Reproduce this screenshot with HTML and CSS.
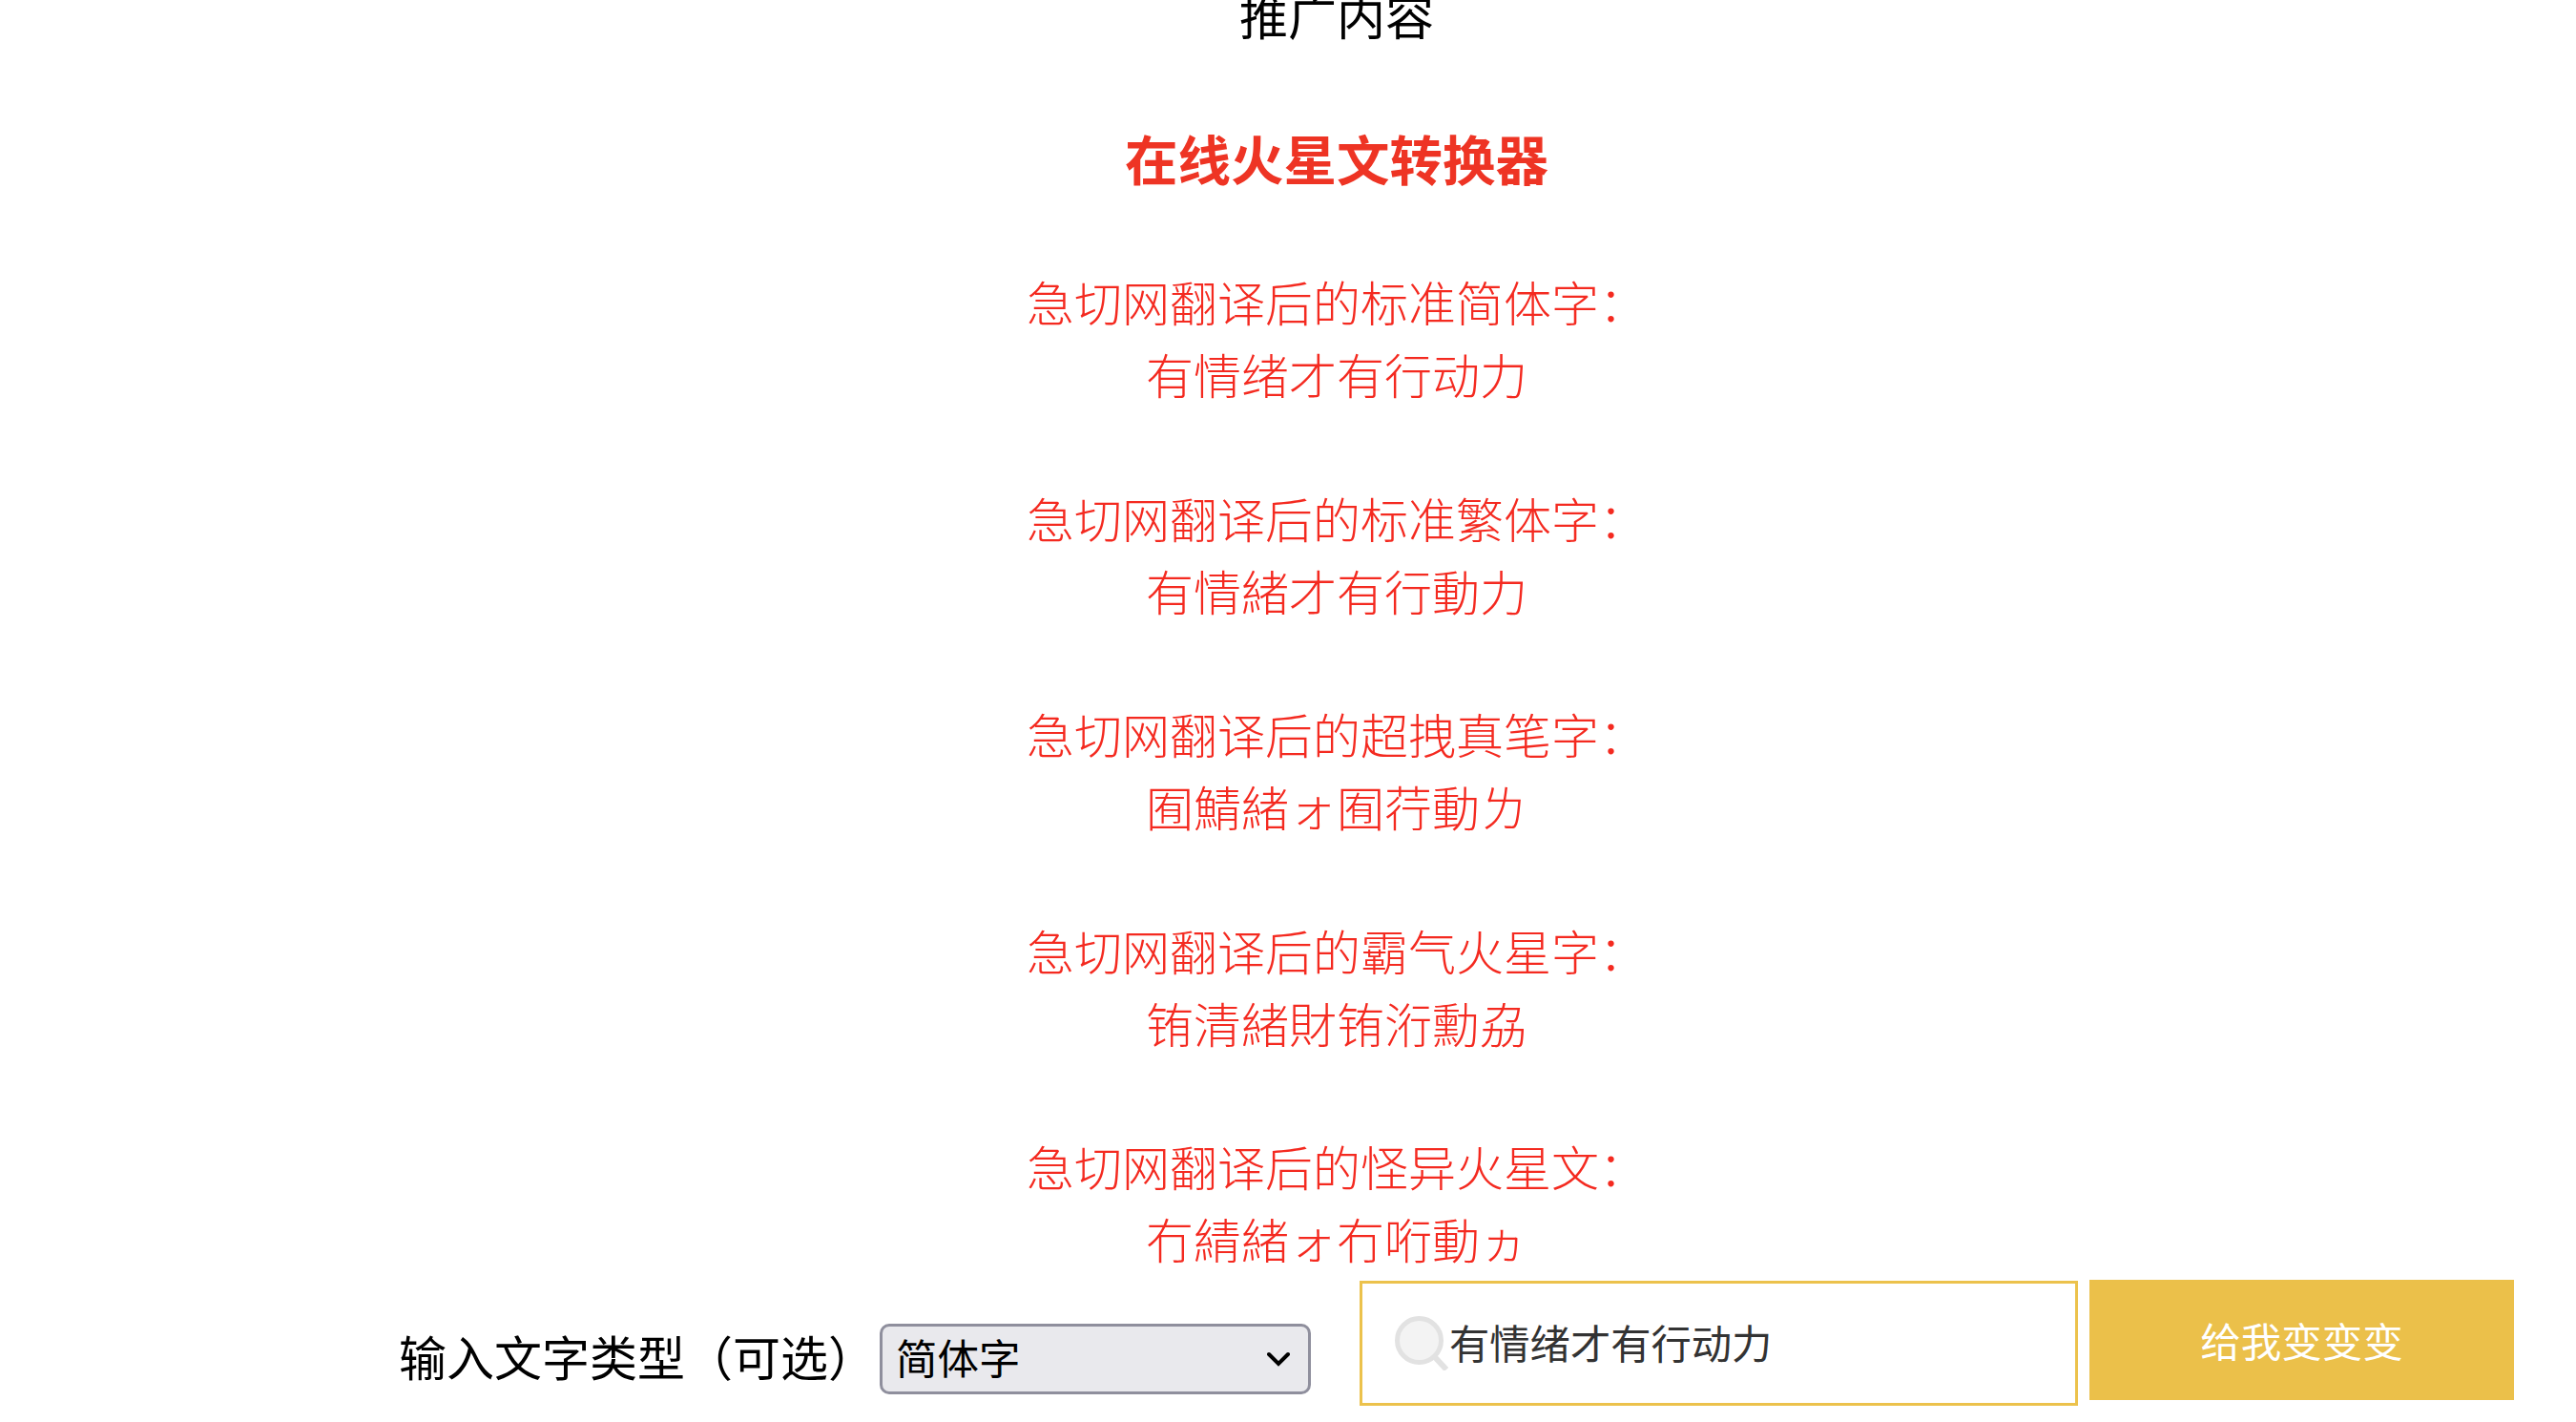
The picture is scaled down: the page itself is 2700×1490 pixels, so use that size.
FILE: index.html
```html
<!DOCTYPE html>
<html lang="zh-CN">
<head>
  <meta charset="UTF-8" />
  <title>在线火星文转换器</title>
  <link rel="stylesheet" href="styles.css">
</head>
<body>

  <div class="content">
    <h3 class="promo">推广内容</h3>
    <h1 class="title">在线火星文转换器</h1>

    <p class="result">急切网翻译后的标准简体字：<br>有情绪才有行动力</p>
    <p class="result">急切网翻译后的标准繁体字：<br>有情緒才有行動力</p>
    <p class="result">急切网翻译后的超拽真笔字：<br>囿鯖緒ォ囿荇動ㄌ</p>
    <p class="result">急切网翻译后的霸气火星字：<br>铕清緒財铕洐勳劦</p>
    <p class="result">急切网翻译后的怪异火星文：<br>冇綪緒ォ冇哘動ヵ</p>
  </div>

  <div class="convert">
    <label class="type-label" for="type">输入文字类型（可选）</label>
    <select id="type" class="type-select">
      <option>简体字</option>
      <option>繁体字</option>
      <option>超拽真笔字</option>
      <option>霸气火星字</option>
      <option>怪异火星文</option>
    </select>
    <div class="search">
      <svg class="search-icon" viewBox="0 0 56 57">
        <circle cx="25.5" cy="25.5" r="23" fill="#f3f3f3" stroke="#e2e2e2" stroke-width="5"/>
        <path d="M41 42 L54 56" stroke="#e2e2e2" stroke-width="6" fill="none"/>
      </svg>
      <input type="text" class="search-input" value="有情绪才有行动力" />
    </div>
    <button class="go">给我变变变</button>
  </div>

</body>
</html>
```

FILE: styles.css
```css
html, body {
  margin: 0;
  padding: 0;
  height: 1490px;
  overflow: hidden;
  background: white;
}

body {
  font-family: "Liberation Serif", "Noto Sans CJK SC", serif;
  color: #f42a20;
}

.content {
  width: 1540px;
  height: 1355px;
  margin-left: 631px;
  text-align: center;
}

.promo {
  margin: -13px 0 0;
  font-family: "Liberation Sans", "Noto Sans CJK SC", sans-serif;
  font-size: 51px;
  line-height: 66px;
  font-weight: 400;
  color: #000;
}

.title {
  margin: 81px 0 76px;
  font-family: "Liberation Sans", "Noto Sans CJK SC", sans-serif;
  font-size: 55.5px;
  line-height: 72px;
  color: #ee3424;
}

.result {
  margin: 74.5px 0 0;
  font-size: 50px;
  line-height: 76px;
  font-weight: 300;
}

.convert {
  display: flex;
  align-items: flex-start;
  padding-left: 418px;
}

.type-label {
  margin-top: 50px;
  font-family: "Liberation Sans", "Noto Sans CJK SC", sans-serif;
  font-size: 50px;
  line-height: 66px;
  color: #000;
}

.type-select {
  appearance: none;
  box-sizing: border-box;
  margin: 45px 0 0 4px;
  width: 452px;
  height: 74px;
  padding: 2px 14px 0;
  font-family: "Liberation Sans", "Noto Sans CJK SC", sans-serif;
  font-size: 43.5px;
  color: #000;
  background: #e9e9ed url("data:image/svg+xml,%3Csvg xmlns='http://www.w3.org/2000/svg' viewBox='0 0 24 16'%3E%3Cpath d='M2 3 L12 13 L22 3' fill='none' stroke='%23000' stroke-width='4' stroke-linecap='round'/%3E%3C/svg%3E") no-repeat right 19px center / 24px 16px;
  border: 3px solid #8f8f9d;
  border-radius: 10px;
}

.search {
  position: relative;
  margin-left: 51px;
}

.search-icon {
  position: absolute;
  left: 37px;
  top: 37px;
  width: 56px;
  height: 57px;
}

.search-input {
  display: block;
  box-sizing: border-box;
  width: 753px;
  height: 131px;
  padding: 0 0 4px 91px;
  font-family: "Liberation Sans", "Noto Sans CJK SC", sans-serif;
  font-size: 42.3px;
  color: #333;
  border: 3px solid #ecc24c;
  border-radius: 0;
  outline: none;
}

.go {
  width: 445px;
  height: 126px;
  margin: -1px 0 0 12px;
  padding-bottom: 3px;
  font-family: "Liberation Sans", "Noto Sans CJK SC", sans-serif;
  font-size: 42.5px;
  color: white;
  background: #ebc04a;
  border: none;
}
```
